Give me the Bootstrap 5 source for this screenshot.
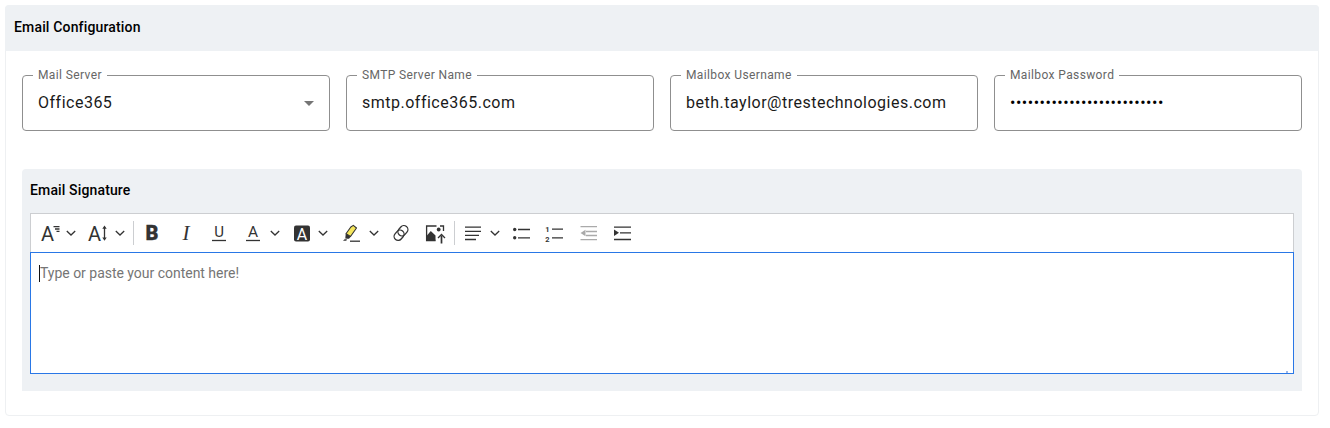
<!DOCTYPE html>
<html lang="en">
<head>
<meta charset="utf-8">
<title>Email Configuration</title>
<link rel="stylesheet" href="https://cdn.jsdelivr.net/npm/bootstrap@5.3.0/dist/css/bootstrap.min.css">
<style>
body{font-family:Roboto,"Liberation Sans",sans-serif;background:#fff;padding:5px 11px 12px 5px;color:#000}
.cfg-card{border:1px solid #eef0f2;border-radius:4px;height:411px;--bs-card-bg:#fff}
.cfg-head{background:#eef1f4;height:46px;margin:-1px -1px 0;border-radius:4px 4px 0 0;padding:0 9px;font-size:14px;font-weight:500;line-height:44px;letter-spacing:.16px}
.cfg-body{padding:24px 16px 0 16px}
.cfg-fields{display:grid;grid-template-columns:repeat(4,308px);gap:16px;height:56px;margin-bottom:38px}
.cfg-field{position:relative;height:56px;border:1px solid #8f8f8f;border-radius:4px;padding:0 15px;display:flex;align-items:center}
.cfg-field label{position:absolute;left:10px;top:-8px;background:#fff;padding:0 5px;font-size:12px;line-height:14px;letter-spacing:.38px;color:#666}
.cfg-field input{border:0;outline:0;background:transparent;width:100%;padding:0;font:400 16px/24px Roboto,sans-serif;letter-spacing:.5px;color:#1a1a1a;margin-top:-1px}
.cfg-field input[type=password]{letter-spacing:.52px;color:#000}
.cfg-caret{position:absolute;right:15px;top:25px;border:5px solid transparent;border-top-color:#757575;border-bottom:0}
.sig-panel{background:#eef1f4;border-radius:4px 4px 0 0;height:222px;padding:0 8px}
.sig-title{font-size:14px;font-weight:500;line-height:16px;padding-top:13px;height:44px;letter-spacing:.14px}
.sig-bar{height:39px;background:#fff;border:1px solid #ccced1;border-bottom:0;padding:0 3px;display:flex;align-items:center}
.tb-btn{width:33.6px;padding:0;border:0;background:none;display:flex;justify-content:center;align-items:center;flex:none}
.tb-drop{width:47px;justify-content:flex-start;padding-left:7px;gap:5px}
.tb-w50{width:50px}.tb-w48{width:48px}.tb-g7{gap:7px}.tb-g8{gap:8px}
.tb-sep{width:1px;height:24px;background:#ccced1;margin:0 2px 0 4.5px;flex:none}
.tb-sep2{margin:0 1px 0 2.5px}
.tb-btn svg{display:block;flex:none;overflow:visible}
.sig-edit{position:relative;height:122px;background:#fff;border:1px solid #2977e6;padding:11px 8px;font-size:14px;line-height:19px;color:#757575;letter-spacing:-.02px}
.sig-edit::after{content:"";position:absolute;right:1px;bottom:0;width:6px;height:2px;border-left:2px dotted #9fb8e8}
.sig-cursor{display:inline-block;width:1px;height:17px;background:#111;vertical-align:-4px}
.i-t{font-family:Roboto,sans-serif;fill:#333}
.i-s{fill:none;stroke:#333;stroke-width:1.3}
</style>
</head>
<body>
<div class="card cfg-card">
  <div class="cfg-head">Email Configuration</div>
  <div class="cfg-body">
    <div class="cfg-fields">
      <div class="cfg-field"><label for="f1">Mail Server</label><input id="f1" value="Office365" readonly><span class="cfg-caret"></span></div>
      <div class="cfg-field"><label for="f2">SMTP Server Name</label><input id="f2" value="smtp.office365.com"></div>
      <div class="cfg-field"><label for="f3">Mailbox Username</label><input id="f3" value="beth.taylor@trestechnologies.com"></div>
      <div class="cfg-field"><label for="f4">Mailbox Password</label><input id="f4" type="password" value="abcdefghijklmnopqrstuvwxyz"></div>
    </div>
    <div class="sig-panel">
      <div class="sig-title">Email Signature</div>
      <div class="sig-bar">
        <button class="tb-btn tb-drop" type="button"><svg width="20" height="20" viewBox="0 0 20 20"><text class="i-t" x="0" y="17.500" font-size="20">A</text><path class="i-s" stroke-width="1" d="M12.500 3.700h6M14 6h4.500M15.500 8.300h3"/></svg><svg width="10" height="10" viewBox="0 0 10 10"><path class="i-s" d="M.8 3 5 7 9.200 3"/></svg></button>
        <button class="tb-btn tb-drop tb-g7" type="button"><svg width="20" height="20" viewBox="0 0 20 20"><text class="i-t" x="0" y="17.500" font-size="20">A</text><path class="i-s" d="M16.500 5v10"/><path d="M16.500 2.500 14.300 5.800h4.400zM16.500 17.800 14.300 14.500h4.400z" fill="#333"/></svg><svg width="10" height="10" viewBox="0 0 10 10"><path class="i-s" d="M.8 3 5 7 9.200 3"/></svg></button>
        <span class="tb-sep"></span>
        <button class="tb-btn" type="button"><svg width="20" height="20" viewBox="0 0 20 20"><text class="i-t" x="10" y="17.300" font-size="20" font-weight="900" text-anchor="middle" stroke="#333" stroke-width=".3">B</text></svg></button>
        <button class="tb-btn" type="button"><svg width="20" height="20" viewBox="0 0 20 20"><text x="10" y="17" font-size="21" font-style="italic" text-anchor="middle" fill="#333" style="font-family:'Liberation Serif',serif">I</text></svg></button>
        <button class="tb-btn" type="button"><svg width="20" height="20" viewBox="0 0 20 20"><text class="i-t" x="10" y="13.500" font-size="15" text-anchor="middle">U</text><path class="i-s" d="M3 17.500h14"/></svg></button>
        <button class="tb-btn tb-drop tb-w50 tb-g7" type="button"><svg width="20" height="20" viewBox="0 0 20 20"><text class="i-t" x="10" y="13.800" font-size="15.500" text-anchor="middle">A</text><path class="i-s" stroke-width="1.600" d="M3 17.500h14"/></svg><svg width="10" height="10" viewBox="0 0 10 10"><path class="i-s" d="M.8 3 5 7 9.200 3"/></svg></button>
        <button class="tb-btn tb-drop tb-w48" type="button"><svg width="20" height="20" viewBox="0 0 20 20"><rect x="1" y="2.500" width="16" height="16" rx="2" fill="#333"/><text x="9" y="16.500" font-size="16" text-anchor="middle" fill="#fff" style="font-family:Roboto,sans-serif">A</text></svg><svg width="10" height="10" viewBox="0 0 10 10"><path class="i-s" d="M.8 3 5 7 9.200 3"/></svg></button>
        <button class="tb-btn tb-drop tb-w50 tb-g8" type="button"><svg width="20" height="20" viewBox="0 0 20 20"><path d="M9.800 4 12.300 2.400 15.500 5 9.500 13.500 5 10.800z" fill="#f5e65c" stroke="#333" stroke-width="1.100" stroke-linejoin="round"/><path d="M4.800 10.800 9.700 13.700 8 15.800H5.500L4.300 14.800z" fill="#333"/><path d="M2 18 4.200 15.200 6.200 16.700 5 18z" fill="#666"/><path class="i-s" stroke-width="1.400" d="M9 18.200h10"/></svg><svg width="10" height="10" viewBox="0 0 10 10"><path class="i-s" d="M.8 3 5 7 9.200 3"/></svg></button>
        <button class="tb-btn" type="button"><svg width="20" height="20" viewBox="0 0 20 20"><g class="i-s" stroke-width="1.200" transform="rotate(-50 10 10)"><rect x="1.500" y="6" width="11" height="8" rx="4"/><rect x="7.500" y="6" width="11" height="8" rx="4"/></g></svg></button>
        <button class="tb-btn" type="button"><svg width="20" height="20" viewBox="0 0 20 20"><path class="i-s" d="M11.500 3H1.600v14.500h9M18.500 8V3H15"/><path d="M1.500 17.500V13L5.800 8l4.700 4.500v5z" fill="#333"/><circle cx="13.700" cy="6.500" r="1.900" fill="#333"/><path d="M16.500 20.500v-8" stroke="#333" stroke-width="1.700"/><path class="i-s" stroke-width="1.700" d="M13 15l3.500-3.500L20 15"/></svg></button>
        <span class="tb-sep tb-sep2"></span>
        <button class="tb-btn tb-drop tb-w48 tb-g7" type="button"><svg width="20" height="20" viewBox="0 0 20 20"><path class="i-s" d="M2 4.200h16M2 8.300h16M2 12.300h14M2 16.500h11"/></svg><svg width="10" height="10" viewBox="0 0 10 10"><path class="i-s" d="M.8 3 5 7 9.200 3"/></svg></button>
        <button class="tb-btn" type="button"><svg width="20" height="20" viewBox="0 0 20 20"><circle cx="3.700" cy="6.500" r="1.700" fill="#333"/><circle cx="3.700" cy="14.800" r="1.700" fill="#333"/><path class="i-s" d="M7 6.500h12M7 14.800h12"/></svg></button>
        <button class="tb-btn" type="button"><svg width="20" height="20" viewBox="0 0 20 20"><text x="3.500" y="8.500" font-size="7.500" font-weight="700" text-anchor="middle" fill="#333" style="font-family:Roboto,sans-serif">1</text><text x="3.500" y="18.500" font-size="7.500" font-weight="700" text-anchor="middle" fill="#333" style="font-family:Roboto,sans-serif">2</text><path class="i-s" d="M8 6.200h11M8 14.800h11"/></svg></button>
        <button class="tb-btn" type="button"><svg width="20" height="20" viewBox="0 0 20 20"><path d="M2.500 10l5-3.300v6.600z" fill="#aaa"/><path fill="none" stroke="#aaa" stroke-width="1.300" d="M2.500 3.700H19M8 8.500h11M8 12.500h11M2.500 16.700H19"/></svg></button>
        <button class="tb-btn" type="button"><svg width="20" height="20" viewBox="0 0 20 20"><path d="M7 9.800 2 6.500v6.600z" fill="#333"/><path class="i-s" d="M2 4.200h17M8 9.800h11M2 16.500h17"/></svg></button>
      </div>
      <div class="sig-edit"><span class="sig-cursor"></span>Type or paste your content here!</div>
    </div>
  </div>
</div>
<script src="https://cdn.jsdelivr.net/npm/bootstrap@5.3.0/dist/js/bootstrap.bundle.min.js"></script>
</body>
</html>
